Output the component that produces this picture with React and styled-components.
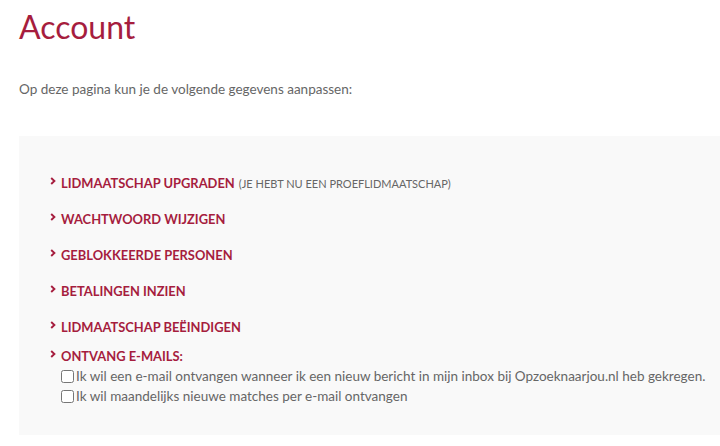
import React from "react";
import styled, { createGlobalStyle } from "styled-components";

const Global = createGlobalStyle`
  html, body { margin: 0; padding: 0; background: #ffffff; }
  body { font-family: "Lato", "Liberation Sans", sans-serif; overflow: hidden; }
`;

const Page = styled.div`
  padding: 0 0 0 19px;
`;

const Title = styled.h1`
  margin: 0;
  padding-top: 7px;
  font-size: 32px;
  line-height: 40px;
  font-weight: 400;
  color: #a61d3e;
`;

const Intro = styled.p`
  margin: 32px 0 0;
  font-size: 13.5px;
  line-height: 20px;
  color: #666666;
`;

const Panel = styled.div`
  margin-top: 37px;
  background: #f9f9f9;
  height: 299px;
  padding: 37px 0 0 31px;
  box-sizing: border-box;
`;

const List = styled.ul`
  list-style: none;
  margin: 0;
  padding: 0;
  display: flex;
  flex-direction: column;
  gap: 16px;
`;

const Item = styled.li`
  display: flex;
  flex-direction: column;
  margin-top: ${(p) => (p.$tight ? "-7px" : "0")};
`;

const ItemHead = styled.div`
  display: flex;
  align-items: center;
  height: 20px;
`;

const Chevron = styled.svg`
  width: 6px;
  height: 8px;
  margin-right: 5px;
  margin-top: -4px;
  flex: none;
`;

const Link = styled.a`
  font-size: 12.9px;
  font-weight: 700;
  color: #a61d3e;
  text-decoration: none;
  text-transform: uppercase;
  white-space: nowrap;
`;

const Note = styled.span`
  font-size: 11px;
  color: #666666;
  margin-left: 4px;
  text-transform: uppercase;
  white-space: nowrap;
`;

const Options = styled.div`
  display: flex;
  flex-direction: column;
  padding-left: 11px;
`;

const Option = styled.label`
  display: flex;
  align-items: center;
  height: 20px;
  font-size: 13.5px;
  color: #666666;
  white-space: nowrap;
`;

const Box = styled.input`
  margin: 0 2px 0 0;
  width: 13px;
  height: 13px;
`;

const Arrow = () => (
  <Chevron viewBox="0 0 6 8">
    <polyline points="1.2,1 4.4,4 1.2,7" fill="none" stroke="#a61d3e" strokeWidth="1.9" />
  </Chevron>
);

const items = [
  { label: "Lidmaatschap upgraden", note: "(je hebt nu een proeflidmaatschap)" },
  { label: "Wachtwoord wijzigen" },
  { label: "Geblokkeerde personen" },
  { label: "Betalingen inzien" },
  { label: "Lidmaatschap beëindigen" },
];

export default function App() {
  return (
    <Page>
      <Global />
      <Title>Account</Title>
      <Intro>Op deze pagina kun je de volgende gegevens aanpassen:</Intro>
      <Panel>
        <List>
          {items.map((it) => (
            <Item key={it.label}>
              <ItemHead>
                <Arrow />
                <Link href="#">{it.label}</Link>
                {it.note && <Note>{it.note}</Note>}
              </ItemHead>
            </Item>
          ))}
          <Item $tight>
            <ItemHead>
              <Arrow />
              <Link as="span">Ontvang e-mails:</Link>
            </ItemHead>
            <Options>
              <Option>
                <Box type="checkbox" />
                Ik wil een e-mail ontvangen wanneer ik een nieuw bericht in mijn inbox bij Opzoeknaarjou.nl heb gekregen.
              </Option>
              <Option>
                <Box type="checkbox" />
                Ik wil maandelijks nieuwe matches per e-mail ontvangen
              </Option>
            </Options>
          </Item>
        </List>
      </Panel>
    </Page>
  );
}
